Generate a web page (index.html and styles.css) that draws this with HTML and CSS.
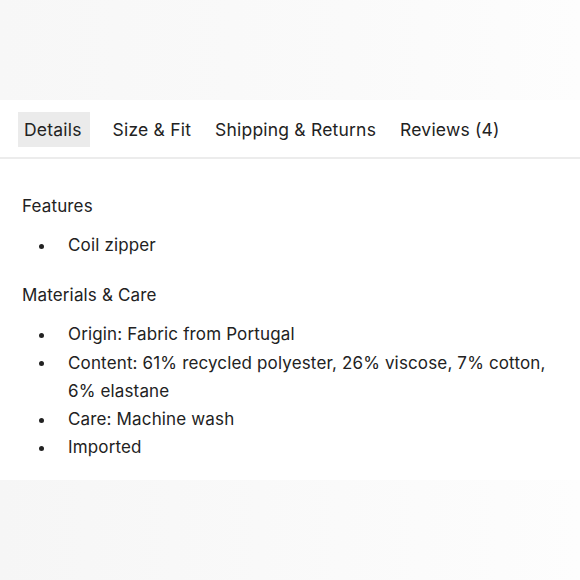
FILE: index.html
```html
<!DOCTYPE html>
<html lang="en">
<head>
  <meta charset="UTF-8" />
  <title>Product Details</title>
  <link rel="stylesheet" href="styles.css">
</head>
<body>
  <div class="top-fade"></div>

  <div class="tabs">
    <div class="tab active">Details</div>
    <div class="tab">Size &amp; Fit</div>
    <div class="tab">Shipping &amp; Returns</div>
    <div class="tab">Reviews (4)</div>
  </div>

  <div class="panel">
    <h3>Features</h3>
    <ul class="bullet-list">
      <li>Coil zipper</li>
    </ul>

    <h3>Materials &amp; Care</h3>
    <ul class="bullet-list">
      <li>Origin: Fabric from Portugal</li>
      <li>Content: 61% recycled polyester, 26% viscose, 7% cotton, 6% elastane</li>
      <li>Care: Machine wash</li>
      <li>Imported</li>
    </ul>
  </div>

  <div class="bottom-fade"></div>
</body>
</html>
```

FILE: styles.css
```css
body {
  margin: 0;
  font-family: 'Inter', sans-serif;
  background-color: #fff;
  color: #222;
  width: 580px;
  height: 580px;
  overflow: hidden;
}

.top-fade {
  height: 100px;
  background: linear-gradient(90deg, #f7f7f7, #fafafa 60%, #fdfdfd);
}

.tabs {
  display: flex;
  gap: 12px;
  padding: 12px 18px 10px;
  border-bottom: 2px solid #ececec;
}

.tab {
  padding: 0 6px;
  height: 35px;
  line-height: 36px;
  font-size: 17.5px;
  letter-spacing: 0.2px;
}

.tab.active {
  background-color: #ebebeb;
  padding-right: 8px;
  margin-right: 5px;
}

.panel {
  padding: 33px 22px 0;
}

.panel h3 {
  margin: 0;
  font-size: 17px;
  font-weight: 400;
  line-height: 28px;
  letter-spacing: 0.15px;
}

ul.bullet-list {
  list-style: none;
  margin: 11px 0 22px;
  padding-left: 46px;
  font-size: 17px;
  line-height: 28.3px;
  letter-spacing: 0.15px;
}

ul.bullet-list:last-child {
  margin-bottom: 18px;
}

ul.bullet-list li::before {
  content: "";
  display: inline-block;
  width: 5px;
  height: 5px;
  border-radius: 50%;
  background-color: #222;
  margin-left: -29px;
  margin-right: 24px;
  vertical-align: middle;
}

.bottom-fade {
  height: 100px;
  background: linear-gradient(90deg, #f6f6f6, #f9f9f9 45%, #fdfdfd);
}
```
